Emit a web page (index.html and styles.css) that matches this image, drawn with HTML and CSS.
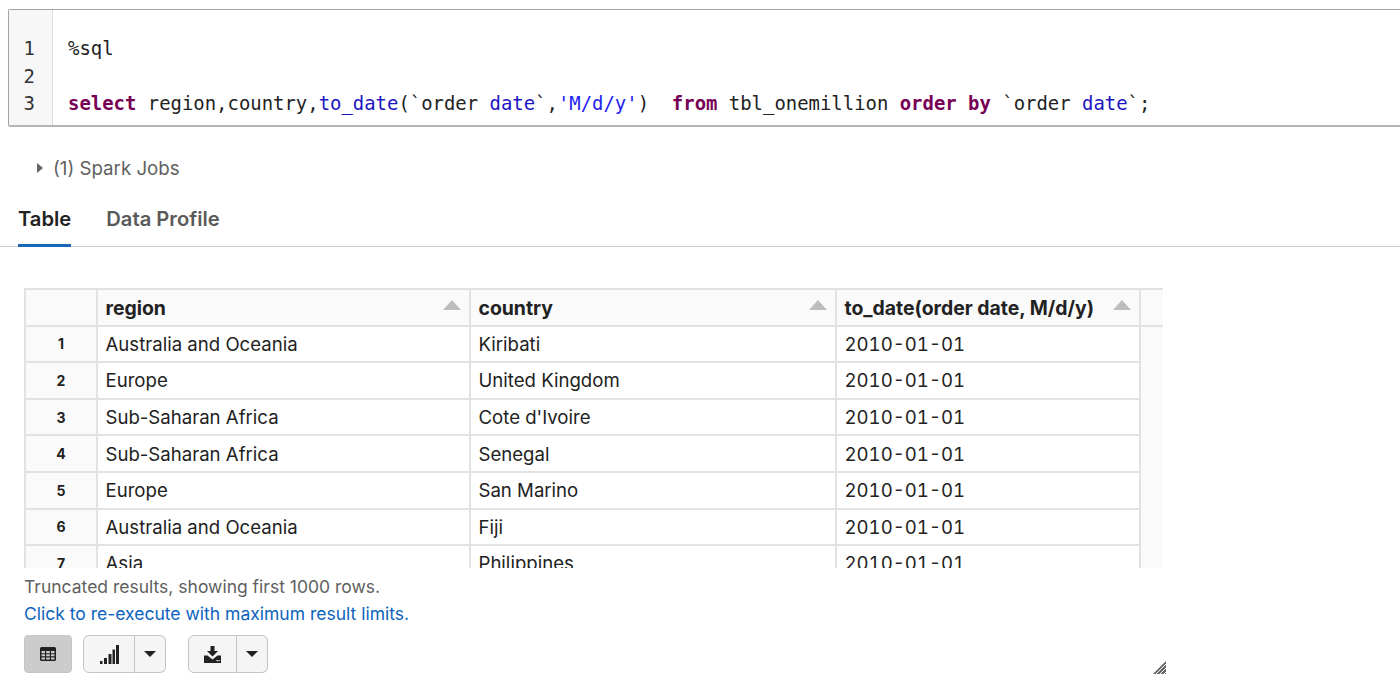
FILE: index.html
```html
<!DOCTYPE html>
<html lang="en">
<head>
    <meta charset="UTF-8">
    <title>Notebook cell</title>
    <link rel="stylesheet" href="styles.css">
</head>
<body>
    <div class="code-cell">
        <div class="gutter">
            <div>1</div>
            <div>2</div>
            <div>3</div>
        </div>
        <div class="code">
            <div class="code-line">%sql</div>
            <div class="code-line">&nbsp;</div>
            <div class="code-line"><span class="kw">select</span> region,country,<span class="fn">to_date</span>(`order <span class="fn">date</span>`,<span class="str">'M/d/y'</span>)  <span class="kw">from</span> tbl_onemillion <span class="kw">order by</span> `order <span class="fn">date</span>`;</div>
        </div>
    </div>

    <div class="jobs"><span class="caret-right"></span>(1) Spark Jobs</div>

    <div class="tabs">
        <div class="tab active">Table</div>
        <div class="tab">Data Profile</div>
    </div>

    <div class="results">
        <table class="result-table">
            <colgroup>
                <col class="col-index">
                <col class="col-region">
                <col class="col-country">
                <col class="col-date">
                <col class="col-rest">
            </colgroup>
            <thead>
                <tr>
                    <th></th>
                    <th>region<span class="sort"></span></th>
                    <th>country<span class="sort"></span></th>
                    <th>to_date(order date, M/d/y)<span class="sort"></span></th>
                    <th class="rest"></th>
                </tr>
            </thead>
            <tbody>
                <tr><td class="index">1</td><td>Australia and Oceania</td><td>Kiribati</td><td class="date">2010-01-01</td><td class="rest"></td></tr>
                <tr><td class="index">2</td><td>Europe</td><td>United Kingdom</td><td class="date">2010-01-01</td><td class="rest"></td></tr>
                <tr><td class="index">3</td><td>Sub-Saharan Africa</td><td>Cote d'Ivoire</td><td class="date">2010-01-01</td><td class="rest"></td></tr>
                <tr><td class="index">4</td><td>Sub-Saharan Africa</td><td>Senegal</td><td class="date">2010-01-01</td><td class="rest"></td></tr>
                <tr><td class="index">5</td><td>Europe</td><td>San Marino</td><td class="date">2010-01-01</td><td class="rest"></td></tr>
                <tr><td class="index">6</td><td>Australia and Oceania</td><td>Fiji</td><td class="date">2010-01-01</td><td class="rest"></td></tr>
                <tr><td class="index">7</td><td>Asia</td><td>Philippines</td><td class="date">2010-01-01</td><td class="rest"></td></tr>
            </tbody>
        </table>
    </div>

    <div class="notice">Truncated results, showing first 1000 rows.</div>
    <a class="rerun" href="#">Click to re-execute with maximum result limits.</a>

    <div class="toolbar">
        <button class="btn btn-table">
            <svg width="16" height="14" viewBox="0 0 16 14"><path fill="#222" fill-rule="evenodd" d="M1.500 0h13A1.500 1.500 0 0 1 16 1.500v11a1.500 1.500 0 0 1-1.500 1.500h-13A1.500 1.500 0 0 1 0 12.500v-11A1.500 1.500 0 0 1 1.500 0zM1.500 4v2.200h3.500V4zm4.700 0v2.200h3.600V4zm4.800 0v2.200h3.500V4zM1.500 7.300v2h3.500v-2zm4.700 0v2h3.600v-2zm4.800 0v2h3.500v-2zM1.500 10.400v2.100h3.500v-2.100zm4.700 0v2.100h3.600v-2.100zm4.800 0v2.100h3.500v-2.100z"/></svg>
        </button>
        <div class="btn-group">
            <button class="btn btn-main">
                <svg width="19" height="19" viewBox="0 0 19 19"><path fill="#222" d="M0 16h2.500v3H0zM4 13h3v6H4zM8.500 9h3v10h-3zM12.500 4.500h2.500V19h-2.500zM16 0h3v19h-3z"/></svg>
            </button>
            <button class="btn btn-drop"><span class="caret-down"></span></button>
        </div>
        <div class="btn-group group-download">
            <button class="btn btn-main">
                <svg width="17" height="17" viewBox="0 0 17 17"><path fill="#222" d="M6.500 0h4v5h3.500L8.500 10.500 3 5h3.500z"/><path fill="#222" fill-rule="evenodd" d="M0 9.500h3.500l5 4 5-4H17V17H0zM12.500 14v1.200h1.300V14zm2 0v1.200h1.200V14z"/></svg>
            </button>
            <button class="btn btn-drop"><span class="caret-down"></span></button>
        </div>
    </div>

    <svg class="resize-grip" width="13" height="13" viewBox="0 0 13 13"><path fill="#666" d="M13 0v13H0z"/><path stroke="#fff" stroke-width="1" d="M3 13 13 3M7 13l6-6M11 13l2-2"/></svg>
</body>
</html>
```

FILE: styles.css
```css
body {
    margin: 0;
    height: 689px;
    overflow: hidden;
    position: relative;
    background-color: #ffffff;
    font-family: Inter, "Liberation Sans", sans-serif;
    color: #222222;
}

/* Code cell */
.code-cell {
    display: flex;
    margin: 9px 0 0 8px;
    height: 118px;
    box-sizing: border-box;
    border: 1px solid #a3a3a3;
    border-right: none;
    border-bottom: 2px solid #b5b5b5;
    border-radius: 2px 0 0 2px;
    font-family: "DejaVu Sans Mono", monospace;
    font-size: 18.93px;
    line-height: 27.6px;
}

.gutter {
    width: 44px;
    box-sizing: border-box;
    padding: 25px 17px 0 0;
    text-align: right;
    background-color: #f7f7f7;
    border-right: 1px solid #dddddd;
    color: #333333;
}

.code {
    padding: 25px 0 0 15px;
    color: #222222;
}

.code-line {
    white-space: pre;
}

.kw {
    font-weight: bold;
    color: #770055;
}

.fn {
    color: #1c14c4;
}

.str {
    color: #2222ee;
}

/* Spark jobs row */
.jobs {
    display: flex;
    align-items: center;
    margin: 29px 0 0 37px;
    height: 24px;
    font-size: 18.7px;
    color: #5f5f5f;
}

.caret-right {
    width: 0;
    height: 0;
    margin-right: 10px;
    border-left: 6px solid #666666;
    border-top: 5px solid transparent;
    border-bottom: 5px solid transparent;
}

/* Tabs */
.tabs {
    display: flex;
    gap: 35px;
    margin-top: 24px;
    padding-left: 18px;
    height: 42px;
    border-bottom: 1px solid #cfcfcf;
}

.tab {
    height: 43px;
    box-sizing: border-box;
    padding-top: 2px;
    font-size: 20.2px;
    font-weight: 600;
    color: #5a5a5a;
}

.tab.active {
    color: #222222;
    border-bottom: 3px solid #1b65b8;
}

/* Result table */
.results {
    width: 1139px;
    height: 280px;
    margin: 41px 0 0 24px;
    overflow: hidden;
}

.result-table {
    width: 1138px;
    table-layout: fixed;
    border-collapse: collapse;
    font-size: 18.6px;
}

.col-index { width: 72px; }
.col-region { width: 373px; }
.col-country { width: 366px; }
.col-date { width: 304px; }
.col-rest { width: 23px; }

.result-table th,
.result-table td {
    height: 36.6px;
    padding: 0 7.5px;
    box-sizing: border-box;
    border: 2px solid #e2e2e2;
    text-align: left;
    white-space: nowrap;
    overflow: hidden;
}

.result-table th {
    position: relative;
    padding-top: 2px;
    font-size: 19.4px;
    font-weight: 700;
    background-color: #fafafa;
}

.result-table td.date {
    font-variant-numeric: tabular-nums;
}

.result-table td.index {
    padding: 0;
    text-align: center;
    font-size: 14px;
    font-weight: 700;
    background-color: #fafafa;
}

.result-table .rest {
    background-color: #fafafa;
    border-right: none;
    border-top: none;
    border-bottom: none;
    padding: 0;
}

.result-table th.rest {
    border-bottom: 2px solid #e2e2e2;
    border-top: 2px solid #e2e2e2;
}

.sort {
    position: absolute;
    top: 10px;
    right: 8px;
    width: 0;
    height: 0;
    border-left: 9px solid transparent;
    border-right: 9px solid transparent;
    border-bottom: 10px solid #bdbdbd;
}

/* Under the table */
.notice {
    margin: 6px 0 0 24px;
    font-size: 17.5px;
    line-height: 26px;
    color: #5f5f5f;
}

.rerun {
    display: block;
    margin: 1px 0 0 24px;
    font-size: 17.5px;
    line-height: 26px;
    color: #0b63bd;
    text-decoration: none;
}

.toolbar {
    display: flex;
    gap: 11px;
    margin: 8px 0 0 24px;
}

.btn {
    display: flex;
    align-items: center;
    justify-content: center;
    height: 38px;
    padding: 0;
    box-sizing: border-box;
    border: 1px solid #c4c4c4;
    background-color: #f5f5f5;
}

.btn-table {
    width: 48px;
    border-radius: 4px;
    background-color: #cccccc;
    border-color: #c6c6c6;
}

.btn-group {
    display: flex;
}

.group-download {
    margin-left: 11px;
}

.btn-main {
    width: 52px;
    border-radius: 6px 0 0 6px;
}

.group-download .btn-main {
    width: 49px;
}

.btn-drop {
    width: 31px;
    border-left: none;
    border-radius: 0 6px 6px 0;
}

.caret-down {
    width: 0;
    height: 0;
    border-left: 6px solid transparent;
    border-right: 6px solid transparent;
    border-top: 6px solid #222222;
}

.resize-grip {
    position: absolute;
    left: 1153px;
    top: 661px;
}
```
